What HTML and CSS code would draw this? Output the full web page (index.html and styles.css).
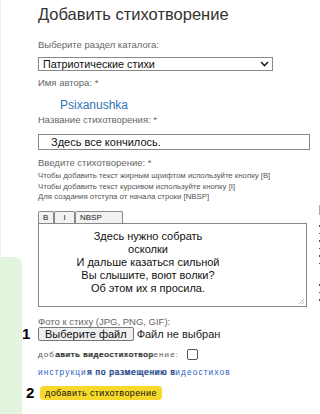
FILE: index.html
```html
<!DOCTYPE html>
<html lang="ru">
<head>
    <meta charset="UTF-8">
    <meta name="viewport" content="width=device-width, initial-scale=1.0">
    <title>Добавить стихотворение</title>
    <link rel="stylesheet" href="styles.css">
</head>
<body>
    <div class="page">
        <div class="side">
            <div class="side-panel"></div>
        </div>

        <div class="main">
            <h1>Добавить стихотворение</h1>
            <form id="poemForm">
                <div class="field f-section">
                    <span class="caption">Выберите раздел каталога:</span>
                    <div class="select-box">
                        <span>Патриотические стихи</span>
                        <svg class="chevron" width="9" height="6" viewBox="0 0 9 6"><path d="M1 1 L4.5 4.5 L8 1" fill="none" stroke="#222" stroke-width="1.6"/></svg>
                    </div>
                </div>

                <div class="field f-author">
                    <span class="caption">Имя автора: *</span>
                    <a class="author" href="#">Psixanushka</a>
                </div>

                <div class="field f-title">
                    <span class="caption">Название стихотворения: *</span>
                    <div class="text-input">Здесь все кончилось.</div>
                </div>

                <div class="field f-poem">
                    <span class="caption">Введите стихотворение: *</span>
                    <div class="hints">
                        <p class="hint">Чтобы добавить текст жирным шрифтом используйте кнопку [B]</p>
                        <p class="hint">Чтобы добавить текст курсивом используйте кнопку [I]</p>
                        <p class="hint">Для создания отступа от начала строки [NBSP]</p>
                    </div>
                    <div class="toolbar">
                        <span class="tool">B</span><span class="tool">I</span><span class="tool">NBSP</span>
                    </div>
                    <div class="poem">
                        Здесь нужно собрать<br>
                        осколки<br>
                        И дальше казаться сильной<br>
                        Вы слышите, воют волки?<br>
                        Об этом их я просила.
                        <svg class="grip" width="7" height="7" viewBox="0 0 7 7"><path d="M6 1 L1 6 M6 4 L4 6" stroke="#999" stroke-width="0.8"/></svg>
                    </div>
                </div>

                <div class="field f-photo">
                    <span class="caption">Фото к стиху (JPG, PNG, GIF):</span>
                    <div class="file-row">
                        <span class="num">1</span>
                        <span class="file-btn">Выберите файл</span>
                        <span class="file-name">Файл не выбран</span>
                    </div>
                </div>

                <div class="check-row">
                    <span class="small">доб<b>авить видеостихотвор</b>ение:</span>
                    <span class="checkbox"></span>
                </div>

                <a class="link" href="#">инструкци<b>я по размещению в</b>идеостихов</a>

                <div class="submit-row">
                    <span class="num">2</span>
                    <button type="button" class="submit">добавить стихотворение</button>
                </div>
            </form>
        </div>

        <div class="aside">
            <div class="aside-box"></div>
            <div class="aside-marks">
                <i></i><i></i><i></i><i></i><i></i><i></i><i class="gap"></i><i></i><i></i><i></i>
            </div>
        </div>
    </div>
</body>
</html>
```

FILE: styles.css
```css
/* страница */
body {
    margin: 0;
    font-family: "Liberation Sans", Arial, sans-serif;
    background-color: #ffffff;
    color: #222;
    overflow: hidden;
}
.page {
    display: flex;
    height: 414px;
}
.side {
    width: 22px;
    flex-shrink: 0;
    display: flex;
    flex-direction: column;
    border-left: 1px solid #f0f0f0;
    box-sizing: border-box;
}
.side-panel {
    margin-top: 257px;
    flex: 1;
    margin-left: -1px;
    background-color: #e3f5df;
    border-top-right-radius: 7px;
}
.main {
    width: 289px;
    flex-shrink: 0;
    padding-left: 16px;
    box-sizing: border-box;
}

/* обрезанная правая колонка */
.aside {
    flex: 1;
    padding-top: 205px;
    padding-left: 8px;
}
.aside-box {
    width: 4px;
    height: 8px;
    border: 1px solid #aaa;
}
.aside-marks {
    margin-top: 10px;
    display: flex;
    flex-direction: column;
    gap: 6px;
}
.aside-marks i {
    display: block;
    width: 2px;
    height: 1.5px;
    background-color: #555;
}
.aside-marks i.gap {
    height: 0;
    margin-top: 8px;
}

h1 {
    margin: 4px 0 0;
    font-size: 16.5px;
    font-weight: normal;
    color: #333;
    line-height: 20px;
}
.caption {
    display: block;
    font-size: 9.5px;
    color: #666;
    line-height: 12px;
}
.f-section .caption {
    margin-top: 15px;
}
.select-box {
    margin-top: 6px;
    width: 235px;
    height: 14px;
    border: 1px solid #888;
    box-sizing: border-box;
    display: flex;
    align-items: center;
    justify-content: space-between;
    padding: 0 3px 0 4px;
    font-size: 10.8px;
    color: #111;
}
.f-author .caption {
    margin-top: 6px;
}
.author {
    display: block;
    margin: 9px 0 0 22px;
    font-size: 12px;
    line-height: 14px;
    color: #2f74b5;
    text-decoration: none;
}
.f-title .caption {
    margin-top: 2px;
}
.text-input {
    margin-top: 8px;
    width: 272px;
    height: 16px;
    border: 1px solid #888;
    box-sizing: border-box;
    padding-left: 12px;
    font-size: 11px;
    line-height: 14px;
    color: #111;
}
.f-poem .caption {
    margin-top: 7px;
}
.hints {
    margin-top: 2px;
}
.hint {
    margin: 0;
    font-size: 7.8px;
    line-height: 10.5px;
    color: #555;
}
.toolbar {
    margin-top: 8px;
    display: flex;
}
.tool {
    height: 11px;
    padding: 0 4px;
    border: 1px solid #888;
    border-bottom: none;
    border-radius: 2px 2px 0 0;
    background-color: #f2f2f2;
    font-size: 8px;
    line-height: 11px;
    color: #222;
}
.tool:nth-child(1) {
    width: 6px;
}
.tool:nth-child(2) {
    width: 11px;
    text-align: center;
}
.tool:nth-child(3) {
    width: 38px;
}
.poem {
    position: relative;
    width: 269px;
    height: 84px;
    border: 1px solid #888;
    box-sizing: border-box;
    padding: 6px 53px 0 4px;
    text-align: center;
    font-size: 11px;
    line-height: 13px;
    color: #111;
}
.grip {
    position: absolute;
    right: 1px;
    bottom: 1px;
}
.f-photo .caption {
    margin-top: 9px;
}
.file-row {
    display: flex;
    align-items: center;
    margin-top: -1px;
}
.num {
    width: 16px;
    margin-left: -16px;
    font-size: 15px;
    font-weight: bold;
    color: #000;
    line-height: 14px;
}
.file-btn {
    height: 12px;
    padding: 0 6px;
    border: 1px solid #777;
    border-radius: 2px;
    background-color: #efefef;
    font-size: 11px;
    line-height: 12px;
    color: #111;
}
.file-name {
    margin-left: 3px;
    font-size: 11px;
    color: #222;
}
.check-row {
    display: flex;
    align-items: center;
    margin-top: 8px;
}
.small {
    font-size: 8px;
    letter-spacing: 1.1px;
    color: #555;
}
.small b,
.link b {
    font-weight: normal;
    color: #222;
    letter-spacing: 0.8px;
    text-shadow: 0.7px 0 #444;
}
.checkbox {
    width: 9px;
    height: 9px;
    margin-left: 8px;
    border: 1px solid #555;
    border-radius: 2px;
}
.link {
    display: block;
    margin-top: 7px;
    font-size: 8.3px;
    letter-spacing: 1.1px;
    color: #2b63c9;
    text-decoration: none;
}
.link b {
    color: #1d3f86;
    text-shadow: 0.7px 0 #2a4a90;
}
.submit-row {
    display: flex;
    align-items: center;
    margin-top: 9px;
}
.submit-row .num {
    width: 14px;
    margin-left: -12px;
}
.submit {
    height: 14px;
    padding: 0 5px;
    border: none;
    border-radius: 4px;
    background-color: #f7d92b;
    font-family: "Liberation Sans", Arial, sans-serif;
    font-size: 9px;
    letter-spacing: 0.4px;
    color: #111;
    cursor: pointer;
}
```
